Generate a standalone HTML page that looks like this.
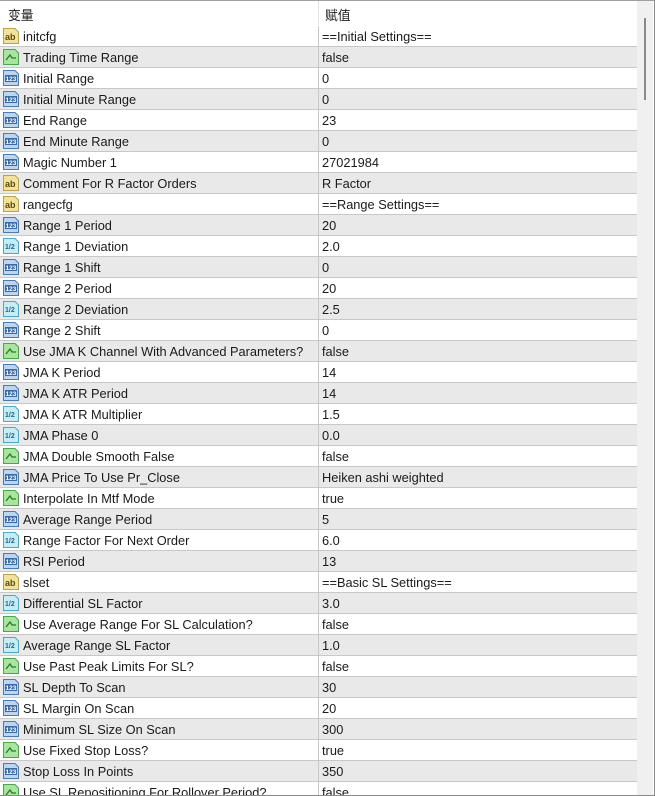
<!DOCTYPE html>
<html><head><meta charset="utf-8"><style>
*{margin:0;padding:0;box-sizing:border-box}
html,body{width:655px;height:796px;overflow:hidden}
body{background:#fff;font-family:"Liberation Sans","Noto Sans CJK SC",sans-serif;font-size:12.8px;color:#1a1a1a;position:relative}
.frame{position:absolute;left:0;top:0;width:655px;height:796px;border:1px solid #8a8a8a;border-left:none;border-top:1px solid #a0a0a0;pointer-events:none}
.hdr{position:absolute;left:0;top:1px;width:637px;height:25px;background:#fff}
.hdr span{position:absolute;top:4px}
.hsep{position:absolute;left:318px;top:1px;width:1px;height:24px;background:#e4e4e4}
.row{position:absolute;left:0;width:637px;height:21px;border-bottom:1px solid #c8c8c8}
.row.g{background:#e9e9e9}
.row .n{position:absolute;left:23px;top:3px;white-space:nowrap}
.row .v{position:absolute;left:322px;top:3px;white-space:nowrap}
.row .d{position:absolute;left:318px;top:0;width:1px;height:21px;background:#c8c8c8}
.row svg{position:absolute;left:3px;top:2px}
.sb{position:absolute;left:637px;top:1px;width:16px;height:794px;background:#f0f0f0}
.th{position:absolute;left:7px;top:17px;width:2px;height:82px;background:#8a8a8a}
</style></head><body>
<div class="hdr"><span style="left:8px">变量</span><span style="left:325px">赋值</span></div>
<div class="hsep"></div>
<div id="rows"></div>
<div class="sb"><div class="th"></div></div>
<div class="frame"></div>
<script>
const I={
a:'<svg width="16" height="16"><path d="M0.5 0.5H12L15.5 4V15.5H0.5Z" fill="#f3e39a" stroke="#b9a24a"/><text x="2" y="12" font-size="9" font-family="Liberation Sans" fill="#5a4a10" font-weight="bold">ab</text></svg>',
b:'<svg width="16" height="16"><path d="M0.5 0.5H12L15.5 4V15.5H0.5Z" fill="#a8e6a0" stroke="#4aa64a"/><path d="M3 11L7 6L9 9H13" fill="none" stroke="#2a7a2a" stroke-width="1.3"/></svg>',
n:'<svg width="16" height="16"><path d="M0.5 0.5H12L15.5 4V15.5H0.5Z" fill="#bcd6f2" stroke="#4a7ab8"/><rect x="2" y="5" width="12" height="7" fill="#3a6aa8"/><text x="2.5" y="11" font-size="6.5" font-family="Liberation Sans" fill="#fff" font-weight="bold">123</text></svg>',
h:'<svg width="16" height="16"><path d="M0.5 0.5H12L15.5 4V15.5H0.5Z" fill="#c6ecf6" stroke="#4aa8c8"/><text x="2" y="11" font-size="7" font-family="Liberation Sans" fill="#1a6a8a" font-weight="bold">1/2</text></svg>'
};
const R=[["a","initcfg","==Initial Settings=="],["b","Trading Time Range","false"],["n","Initial Range","0"],["n","Initial Minute Range","0"],["n","End Range","23"],["n","End Minute Range","0"],["n","Magic Number 1","27021984"],["a","Comment For R Factor Orders","R Factor"],["a","rangecfg","==Range Settings=="],["n","Range 1 Period","20"],["h","Range 1 Deviation","2.0"],["n","Range 1 Shift","0"],["n","Range 2 Period","20"],["h","Range 2 Deviation","2.5"],["n","Range 2 Shift","0"],["b","Use JMA K Channel With Advanced Parameters?","false"],["n","JMA K Period","14"],["n","JMA K ATR Period","14"],["h","JMA K ATR Multiplier","1.5"],["h","JMA Phase 0","0.0"],["b","JMA Double Smooth False","false"],["n","JMA Price To Use Pr_Close","Heiken ashi weighted"],["b","Interpolate In Mtf Mode","true"],["n","Average Range Period","5"],["h","Range Factor For Next Order","6.0"],["n","RSI Period","13"],["a","slset","==Basic SL Settings=="],["h","Differential SL Factor","3.0"],["b","Use Average Range For SL Calculation?","false"],["h","Average Range SL Factor","1.0"],["b","Use Past Peak Limits For SL?","false"],["n","SL Depth To Scan","30"],["n","SL Margin On Scan","20"],["n","Minimum SL Size On Scan","300"],["b","Use Fixed Stop Loss?","true"],["n","Stop Loss In Points","350"],["b","Use SL Repositioning For Rollover Period?","false"]];
let h='';R.forEach((r,i)=>{h+=`<div class="row${i%2?' g':''}" style="top:${26+i*21}px">${I[r[0]]}<span class="n">${r[1]}</span><div class="d"></div><span class="v">${r[2]}</span></div>`});
document.getElementById('rows').innerHTML=h;
</script>
</body></html>
